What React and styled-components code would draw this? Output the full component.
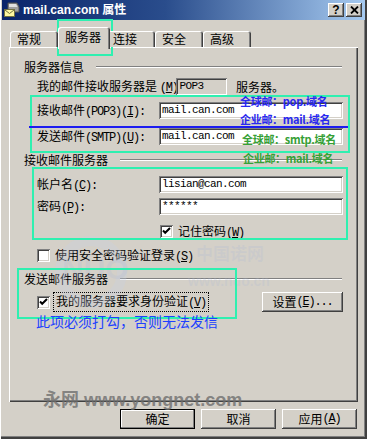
import React from 'react'
import styled, { createGlobalStyle, css } from 'styled-components'

const face = '#d4d0c8'
const shadow = '#808080'
const dark = '#404040'
const mint = '#2ff0b0'
const uiFont = `"Noto Sans CJK SC", "Liberation Sans", sans-serif`
const monoFont = `"Liberation Mono", "Noto Sans CJK SC", monospace`

const raised = css`
  box-shadow: inset -1px -1px ${dark}, inset 1px 1px #fff, inset -2px -2px ${shadow}, inset 2px 2px ${face};
`
const sunken = css`
  box-shadow: inset 1px 1px ${shadow}, inset -1px -1px #fff, inset 2px 2px ${dark}, inset -2px -2px ${face};
`

const GlobalStyle = createGlobalStyle`
  html, body { margin: 0; padding: 0; background: ${face}; }
  * { box-sizing: border-box; }
`

const tabs = [
  { label: '常规', w: 48 },
  { label: '服务器', w: 52, active: true },
  { label: '连接', w: 49 },
  { label: '安全', w: 48 },
  { label: '高级', w: 48 },
]

const AppIcon = () => (
  <svg width="16" height="16" viewBox="0 0 16 16">
    <path d="M4 1 H13 L15 5 V10 H4 Z" fill="#a0a0a0" stroke="#505050" />
    <path d="M5 2 H12 L13.5 5 H5 Z" fill="#e0e0e0" />
    <rect x="0.5" y="7.5" width="10" height="7" fill="#fff8a0" stroke="#707040" />
    <path d="M1 8 L5.5 11.5 L10 8" fill="none" stroke="#707040" />
  </svg>
)

const Check = () => (
  <svg width="13" height="13" viewBox="0 0 13 13">
    <path d="M3 5.5 L5.2 7.8 L10 3" fill="none" stroke="#000" strokeWidth="2" />
  </svg>
)

const CloseGlyph = () => (
  <svg width="9" height="8" viewBox="0 0 9 8">
    <path d="M1 0.5 L8 7.5 M8 0.5 L1 7.5" stroke="#000" strokeWidth="1.8" />
  </svg>
)

const App = () => (
  <>
    <GlobalStyle />
    <Window>
      <TitleBar>
        <AppIcon />
        <Title>mail.can.com 属性</Title>
        <CapButton>?</CapButton>
        <CapButton $gap={2}><CloseGlyph /></CapButton>
      </TitleBar>

      <Body>
        <TabStrip>
          {tabs.map(t => (
            <Tab key={t.label} $w={t.w} $active={t.active}>{t.label}</Tab>
          ))}
        </TabStrip>

        <Panel>
          <GroupHeader>服务器信息</GroupHeader>
          <Row $mt={3}>
            <Label $w={147}>我的邮件接收服务器是 <L>(<u>M</u>)</L></Label>
            <ReadBox>POP3</ReadBox>
            <Label>服务器。</Label>
          </Row>
          <Row $mt={7}>
            <Label>接收邮件<L>(POP3)(<u>I</u>):</L></Label>
            <Field>mail.can.com</Field>
          </Row>
          <Row $mt={9}>
            <Label>发送邮件<L>(SMTP)(<u>U</u>):</L></Label>
            <Field>mail.can.com</Field>
          </Row>

          <GroupHeader $mt={7}>接收邮件服务器</GroupHeader>
          <Row $mt={8}>
            <Label>帐户名<L>(<u>C</u>):</L></Label>
            <Field>lisian@can.com</Field>
          </Row>
          <Row $mt={5}>
            <Label>密码<L>(<u>P</u>):</L></Label>
            <Field>******</Field>
          </Row>
          <CheckRow $mt={10} $indent={151}>
            <CheckBox><Check /></CheckBox>
            <span>记住密码<L>(<u>W</u>)</L></span>
          </CheckRow>
          <CheckRow $mt={11}>
            <CheckBox />
            <span>使用安全密码验证登录<L>(<u>S</u>)</L></span>
          </CheckRow>

          <GroupHeader $mt={9}>发送邮件服务器</GroupHeader>
          <AuthRow>
            <CheckRow>
              <CheckBox><Check /></CheckBox>
              <Focus>我的服务器要求身份验证<L>(<u>V</u>)</L></Focus>
            </CheckRow>
            <Button $w={81}>设置<L>(<u>E</u>)...</L></Button>
          </AuthRow>
        </Panel>

        <ButtonRow>
          <Button $default>确定</Button>
          <Button>取消</Button>
          <Button>应用<L>(<u>A</u>)</L></Button>
        </ButtonRow>
      </Body>

      <Notes>
        <Faint style={{ left: 55, top: 236 }}><FaintRing /></Faint>
        <Faint style={{ left: 62, top: 254, fontSize: 30 }}>NUO</Faint>
        <Faint style={{ left: 196, top: 246, fontSize: 17 }}>中国诺网</Faint>
        <Faint style={{ left: 188, top: 274, fontSize: 14 }}>www.nuo.cn</Faint>

        <Frame style={{ left: 57, top: 19, width: 56, height: 37 }} />
        <Frame style={{ left: 30, top: 95, width: 320, height: 58 }} />
        <BlueRule style={{ left: 29, top: 126, width: 319 }} />
        <Frame style={{ left: 32, top: 167, width: 316, height: 73 }} />
        <Frame style={{ left: 17, top: 268, width: 220, height: 51 }} />

        <Note $c="#2828f0" style={{ left: 240, top: 95 }}>全球邮：pop.域名</Note>
        <Note $c="#2828f0" style={{ left: 240, top: 113 }}>企业邮：mail.域名</Note>
        <Note $c="#35a035" style={{ left: 242, top: 133 }}>全球邮：smtp.域名</Note>
        <Note $c="#35a035" style={{ left: 243, top: 152 }}>企业邮：mail.域名</Note>
        <BigNote style={{ left: 36, top: 312 }}>此项必须打勾，否则无法发信</BigNote>
        <Mark style={{ left: 43, top: 390 }}>永网 www.yongnet.com</Mark>
      </Notes>
    </Window>
  </>
)

export default App

const Window = styled.div`
  position: relative;
  width: 367px;
  height: 439px;
  padding: 0 2px 3px 2px;
  background: ${face};
  font-family: ${uiFont};
  font-size: 12px;
  color: #000;
  box-shadow: inset 1px 0 #fff, inset -1px -1px ${dark}, inset -2px -2px ${dark}, inset -3px -3px ${shadow};
`

const TitleBar = styled.div`
  display: flex;
  align-items: center;
  height: 20px;
  padding: 0 3px 0 2px;
  background: linear-gradient(to right, #0a246a 0%, #2a4d8c 45%, #a6caf0 100%);
`

const Title = styled.div`
  flex: 1;
  margin-left: 3px;
  color: #fff;
  font-family: "Liberation Sans", "Noto Sans CJK SC", sans-serif;
  font-weight: bold;
  font-size: 12px;
  line-height: 20px;
`

const CapButton = styled.div`
  display: flex;
  align-items: center;
  justify-content: center;
  width: 16px;
  height: 14px;
  margin-left: ${p => p.$gap || 0}px;
  background: ${face};
  font-family: "Liberation Sans", sans-serif;
  font-weight: bold;
  font-size: 12px;
  line-height: 14px;
  ${raised}
`

const Body = styled.div`
  padding: 0 7px;
`

const TabStrip = styled.div`
  display: flex;
  align-items: flex-end;
  height: 27px;
  padding-left: 1px;
`

const Tab = styled.div`
  position: relative;
  display: flex;
  align-items: center;
  width: ${p => p.$w}px;
  height: ${p => (p.$active ? 22 : 16)}px;
  margin-bottom: ${p => (p.$active ? -2 : 0)}px;
  margin-right: ${p => (p.$active ? -4 : 0)}px;
  padding: 0 0 ${p => (p.$active ? 3 : 0)}px 7px;
  z-index: ${p => (p.$active ? 2 : 1)};
  background: ${face};
  border-radius: 3px 3px 0 0;
  box-shadow: inset 1px 1px #fff, inset -1px 0 ${dark}, inset -2px 0 ${shadow};
  line-height: 16px;
`

const Panel = styled.div`
  position: relative;
  height: 355px;
  padding-top: 12px;
  background: ${face};
  box-shadow: inset 1px 1px #fff, inset -1px -1px ${dark}, inset -2px -2px ${shadow};
`

const GroupHeader = styled.div`
  display: flex;
  align-items: center;
  gap: 12px;
  height: 16px;
  margin: ${p => p.$mt || 0}px 16px 0 15px;
  line-height: 16px;

  &::after {
    content: '';
    flex: 1;
    border-top: 1px solid ${shadow};
    border-bottom: 1px solid #fff;
  }
`

const Row = styled.div`
  display: flex;
  align-items: center;
  height: 17px;
  margin-top: ${p => p.$mt || 0}px;
  padding-left: 28px;
`

const Label = styled.div`
  width: ${p => (p.$w ? `${p.$w}px` : 'auto')};
  min-width: ${p => (p.$w ? 0 : 122)}px;
  white-space: nowrap;
  line-height: 17px;

  & + & { min-width: 0; }
`

// half-width latin run, like the dialog's bitmap font
const L = styled.span`
  font-family: ${monoFont};
  font-size: 12px;
  letter-spacing: -1.2px;
`

const Field = styled.div`
  width: 184px;
  height: 17px;
  padding: 0 3px;
  background: #fff;
  font-family: ${monoFont};
  font-size: 11px;
  letter-spacing: -0.6px;
  line-height: 17px;
  ${sunken}
`

const ReadBox = styled(Field)`
  width: 53px;
  margin-right: 9px;
  background: ${face};
`

const CheckRow = styled.div`
  display: flex;
  align-items: center;
  gap: 5px;
  height: 13px;
  margin-top: ${p => p.$mt || 0}px;
  padding-left: ${p => p.$indent || 28}px;
  white-space: nowrap;
  line-height: 13px;
`

const CheckBox = styled.div`
  width: 13px;
  height: 13px;
  flex: none;
  background: #fff;
  ${sunken}
`

const Focus = styled.span`
  padding: 0 1px;
  outline: 1px dotted #000;
  outline-offset: 1px;
`

const AuthRow = styled.div`
  display: flex;
  align-items: center;
  justify-content: space-between;
  height: 20px;
  margin: 5px 15px 0 0;
`

const Button = styled.div`
  display: flex;
  align-items: center;
  justify-content: center;
  width: ${p => p.$w || 75}px;
  height: 20px;
  background: ${face};
  white-space: nowrap;
  line-height: 20px;
  ${raised}
  ${p => p.$default && css`
    box-shadow: inset 0 0 0 1px #000, inset -2px -2px ${shadow}, inset 2px 2px #fff;
  `}
`

const ButtonRow = styled.div`
  display: flex;
  justify-content: flex-end;
  gap: 6px;
  margin-top: 7px;
  padding-right: 1px;
`

const Notes = styled.div`
  position: absolute;
  inset: 0;
  pointer-events: none;
`

const Frame = styled.div`
  position: absolute;
  border: 2px solid ${mint};
`

const BlueRule = styled.div`
  position: absolute;
  height: 2px;
  background: #1c1cf0;
`

const Note = styled.div`
  position: absolute;
  color: ${p => p.$c};
  font-size: 11px;
  font-weight: bold;
  line-height: 12px;
  white-space: nowrap;
  letter-spacing: -0.3px;
`

const BigNote = styled.div`
  position: absolute;
  color: #2040ff;
  font-size: 14px;
  line-height: 18px;
  white-space: nowrap;
`

const Mark = styled.div`
  position: absolute;
  color: rgba(110, 110, 110, 0.8);
  font-family: "Liberation Sans", "Noto Sans CJK SC", sans-serif;
  font-weight: bold;
  font-size: 18px;
  line-height: 20px;
  white-space: nowrap;
`

const Faint = styled.div`
  position: absolute;
  color: rgba(170, 185, 215, 0.22);
  font-family: "Liberation Sans", "Noto Sans CJK SC", sans-serif;
  font-weight: bold;
  line-height: 1;
  white-space: nowrap;
`

const FaintRing = styled.div`
  width: 72px;
  height: 72px;
  border-radius: 50%;
  border: 10px solid rgba(200, 210, 230, 0.3);
`
